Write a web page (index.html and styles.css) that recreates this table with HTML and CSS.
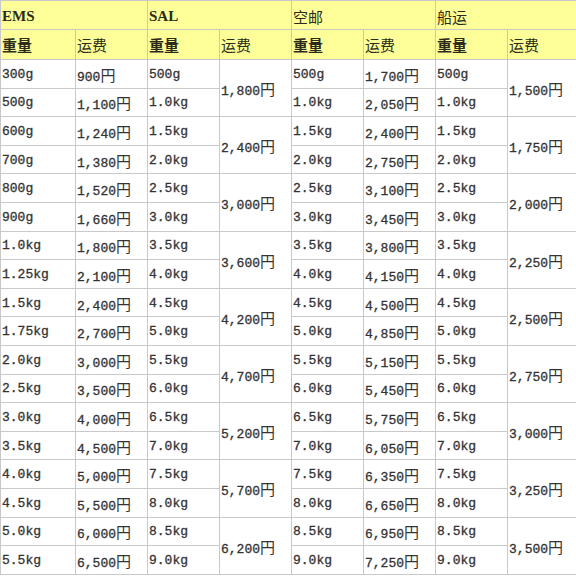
FILE: index.html
```html
<!DOCTYPE html>
<html lang="zh">
<head>
<meta charset="utf-8">
<title>运费表</title>
<link rel="stylesheet" href="styles.css">
</head>
<body>
<table class="rates">
  <colgroup>
    <col class="c-first"><col class="c"><col class="c"><col class="c"><col class="c"><col class="c"><col class="c"><col class="c">
  </colgroup>
  <thead>
    <tr class="h1">
      <th colspan="2" class="lat b">EMS</th>
      <th colspan="2" class="lat b">SAL</th>
      <th colspan="2">空邮</th>
      <th colspan="2">船运</th>
    </tr>
    <tr class="h2">
      <th class="b">重量</th><th>运费</th>
      <th class="b">重量</th><th>运费</th>
      <th class="b">重量</th><th>运费</th>
      <th class="b">重量</th><th>运费</th>
    </tr>
  </thead>
  <tbody>
    <tr><td>300g</td><td>900<span class="y">円</span></td><td>500g</td><td rowspan="2">1,800<span class="y">円</span></td><td>500g</td><td>1,700<span class="y">円</span></td><td>500g</td><td rowspan="2">1,500<span class="y">円</span></td></tr>
    <tr><td>500g</td><td>1,100<span class="y">円</span></td><td>1.0kg</td><td>1.0kg</td><td>2,050<span class="y">円</span></td><td>1.0kg</td></tr>
    <tr><td>600g</td><td>1,240<span class="y">円</span></td><td>1.5kg</td><td rowspan="2">2,400<span class="y">円</span></td><td>1.5kg</td><td>2,400<span class="y">円</span></td><td>1.5kg</td><td rowspan="2">1,750<span class="y">円</span></td></tr>
    <tr><td>700g</td><td>1,380<span class="y">円</span></td><td>2.0kg</td><td>2.0kg</td><td>2,750<span class="y">円</span></td><td>2.0kg</td></tr>
    <tr><td>800g</td><td>1,520<span class="y">円</span></td><td>2.5kg</td><td rowspan="2">3,000<span class="y">円</span></td><td>2.5kg</td><td>3,100<span class="y">円</span></td><td>2.5kg</td><td rowspan="2">2,000<span class="y">円</span></td></tr>
    <tr><td>900g</td><td>1,660<span class="y">円</span></td><td>3.0kg</td><td>3.0kg</td><td>3,450<span class="y">円</span></td><td>3.0kg</td></tr>
    <tr><td>1.0kg</td><td>1,800<span class="y">円</span></td><td>3.5kg</td><td rowspan="2">3,600<span class="y">円</span></td><td>3.5kg</td><td>3,800<span class="y">円</span></td><td>3.5kg</td><td rowspan="2">2,250<span class="y">円</span></td></tr>
    <tr><td>1.25kg</td><td>2,100<span class="y">円</span></td><td>4.0kg</td><td>4.0kg</td><td>4,150<span class="y">円</span></td><td>4.0kg</td></tr>
    <tr><td>1.5kg</td><td>2,400<span class="y">円</span></td><td>4.5kg</td><td rowspan="2">4,200<span class="y">円</span></td><td>4.5kg</td><td>4,500<span class="y">円</span></td><td>4.5kg</td><td rowspan="2">2,500<span class="y">円</span></td></tr>
    <tr><td>1.75kg</td><td>2,700<span class="y">円</span></td><td>5.0kg</td><td>5.0kg</td><td>4,850<span class="y">円</span></td><td>5.0kg</td></tr>
    <tr><td>2.0kg</td><td>3,000<span class="y">円</span></td><td>5.5kg</td><td rowspan="2">4,700<span class="y">円</span></td><td>5.5kg</td><td>5,150<span class="y">円</span></td><td>5.5kg</td><td rowspan="2">2,750<span class="y">円</span></td></tr>
    <tr><td>2.5kg</td><td>3,500<span class="y">円</span></td><td>6.0kg</td><td>6.0kg</td><td>5,450<span class="y">円</span></td><td>6.0kg</td></tr>
    <tr><td>3.0kg</td><td>4,000<span class="y">円</span></td><td>6.5kg</td><td rowspan="2">5,200<span class="y">円</span></td><td>6.5kg</td><td>5,750<span class="y">円</span></td><td>6.5kg</td><td rowspan="2">3,000<span class="y">円</span></td></tr>
    <tr><td>3.5kg</td><td>4,500<span class="y">円</span></td><td>7.0kg</td><td>7.0kg</td><td>6,050<span class="y">円</span></td><td>7.0kg</td></tr>
    <tr><td>4.0kg</td><td>5,000<span class="y">円</span></td><td>7.5kg</td><td rowspan="2">5,700<span class="y">円</span></td><td>7.5kg</td><td>6,350<span class="y">円</span></td><td>7.5kg</td><td rowspan="2">3,250<span class="y">円</span></td></tr>
    <tr><td>4.5kg</td><td>5,500<span class="y">円</span></td><td>8.0kg</td><td>8.0kg</td><td>6,650<span class="y">円</span></td><td>8.0kg</td></tr>
    <tr><td>5.0kg</td><td>6,000<span class="y">円</span></td><td>8.5kg</td><td rowspan="2">6,200<span class="y">円</span></td><td>8.5kg</td><td>6,950<span class="y">円</span></td><td>8.5kg</td><td rowspan="2">3,500<span class="y">円</span></td></tr>
    <tr><td>5.5kg</td><td>6,500<span class="y">円</span></td><td>9.0kg</td><td>9.0kg</td><td>7,250<span class="y">円</span></td><td>9.0kg</td></tr>
  </tbody>
</table>
</body>
</html>
```

FILE: styles.css
```css
html, body {
  margin: 0;
  padding: 0;
  overflow: hidden;
  background: #ffffff;
}

.rates {
  border-collapse: collapse;
  table-layout: fixed;
  width: 579px;
  color: #333333;
}

.c-first { width: 75px; }
.c { width: 72px; }

.rates th,
.rates td {
  border: 1px solid #c9c9c9;
  padding: 0 2px 0 1px;
  text-align: left;
  vertical-align: middle;
  white-space: nowrap;
  overflow: hidden;
}

.rates th {
  background: #ffff99;
  font: normal 15px "Noto Sans CJK SC", sans-serif;
  color: #2b2b1a;
}

.rates th.lat {
  font-family: "Liberation Serif", "Noto Sans CJK SC", serif;
  font-size: 15px;
}

.rates th.b { font-weight: bold; }

.h1 { height: 29px; }
.h1 th { padding-top: 3px; }
.h2 { height: 30px; }

.rates td {
  font: 13px "Liberation Mono", "Noto Sans CJK SC", monospace;
  -webkit-text-stroke: 0.3px #333333;
  padding-top: 1px;
}

.rates tbody tr { height: 28.6px; }

.y {
  font: 15px "Noto Sans CJK JP", "Noto Sans CJK SC", sans-serif;
  -webkit-text-stroke: 0;
}
```
